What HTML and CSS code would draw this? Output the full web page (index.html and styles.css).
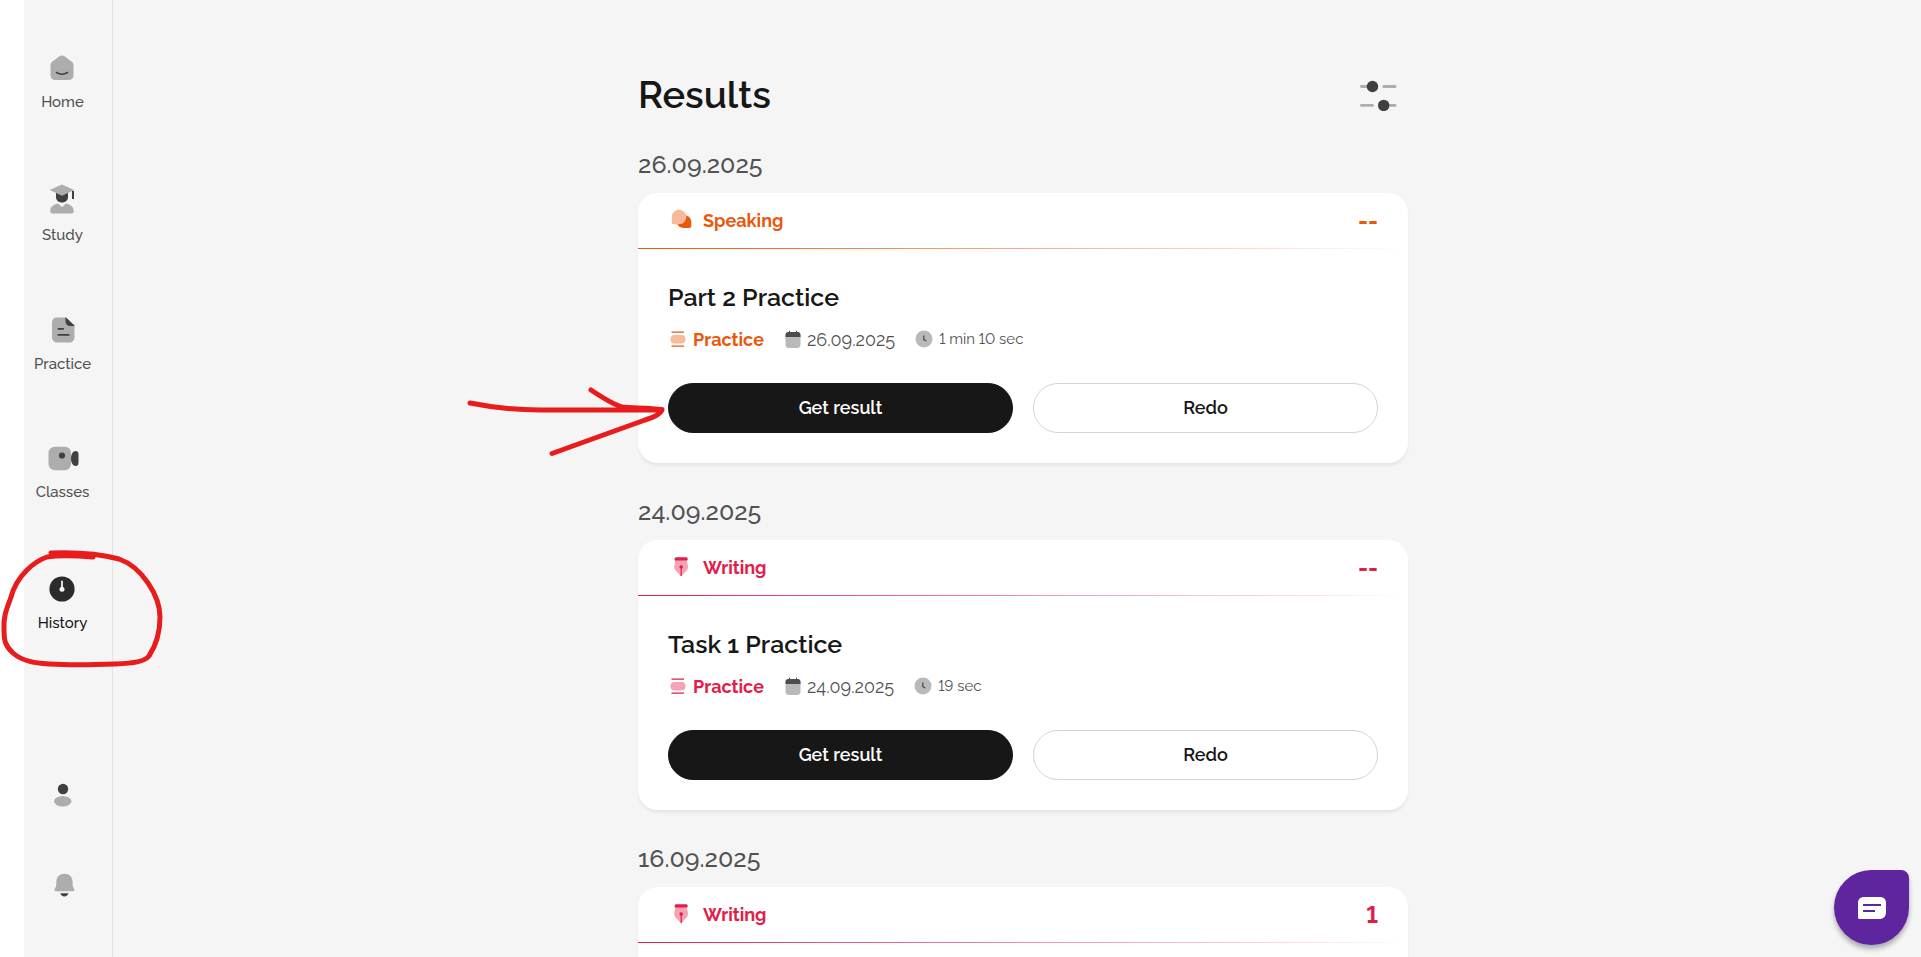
FILE: index.html
```html
<!DOCTYPE html>
<html lang="en">
<head>
<meta charset="utf-8">
<title>Results</title>
<meta name="viewport" content="width=device-width, initial-scale=1">
<link rel="stylesheet" href="styles.css">
</head>
<body>
<svg class="sprite" aria-hidden="true">
  <symbol id="i-practice" viewBox="0 0 16 16"><path d="M1.500 1.200h12.500M1.500 15.200h12.500" stroke="currentColor" stroke-width="1.200"/><rect x=".5" y="4" width="15" height="8.400" rx="4" fill="currentColor" opacity=".4"/></symbol>
  <symbol id="i-calendar" viewBox="0 0 16 18"><rect x=".5" y="2" width="15" height="16" rx="3.400" fill="#b9b9b9"/><path d="M.5 7V5a3 3 0 0 1 3-3H4V.8h1V2h6V.8h1V2h.5a3 3 0 0 1 3 3v2z" fill="#4d4d4d"/></symbol>
  <symbol id="i-clock" viewBox="0 0 18 18"><circle cx="9" cy="9" r="8.500" fill="#b9b9b9"/><path d="M8.800 5.500v4.200l2.600 1.300" fill="none" stroke="#4d4d4d" stroke-width="1.300"/></symbol>
  <symbol id="i-pen" viewBox="0 0 24 24"><path d="M5 5h12l.2 2.500L18 11c.2 1.400-.2 2.700-1 4l-5.800 6.500L5.200 15c-.8-1.300-1.200-2.600-1-4l.8-3.500z" fill="#f7a1b4"/><rect x="4.500" y="2.200" width="13.300" height="3.400" rx="1.700" fill="#e11d48"/><path d="M11.200 11v10" stroke="#e11d48" stroke-width="1.200"/><circle cx="11.200" cy="12" r="1.800" fill="#e11d48"/></symbol>
</svg>
<div class="app">
  <nav class="sidebar" aria-label="Main">
    <a class="nav-item" href="#home">
      <svg width="26" height="26" viewBox="0 0 26 26"><path d="M10.500 1.200c1.500-1.100 3.500-1.100 5 0l7 5.400c1.400 1.100 2 2.200 2 3.900v9.500c0 3.300-1.700 5-5 5h-13c-3.300 0-5-1.700-5-5v-9.500c0-1.700.6-2.800 2-3.900z" fill="#adadad"/><path d="M7.500 17.500q5.500 3.300 11 0" fill="none" stroke="#404040" stroke-width="1.500" stroke-linecap="round"/></svg>
      <span>Home</span>
    </a>
    <a class="nav-item" href="#study">
      <svg width="26" height="30" viewBox="0 0 26 30"><path d="M7 9h12v4c0 3.400-2.600 5.500-6 5.500S7 16.400 7 13z" fill="#404040"/><path d="M.7 6 13 .5 25.300 6 13 11.800z" fill="#adadad"/><path d="M24 7v8" stroke="#404040" stroke-width="2"/><path d="M9 19.500l4 3.500 4-3.500c5 1 7.800 4 7.800 7.500 0 2-1 2.500-3 2.500H4.200c-2 0-3-.5-3-2.500 0-3.500 2.800-6.500 7.800-7.500z" fill="#adadad"/></svg>
      <span>Study</span>
    </a>
    <a class="nav-item" href="#practice">
      <svg width="26" height="26" viewBox="0 .5 26 26"><path d="M7 1h8.500L24.500 9.500V20c0 4-2 6-6 6H8c-4 0-6-2-6-6V7c0-4 1.500-6 5-6z" fill="#adadad"/><path d="M15.500.500 25 9.500h-4c-3.800 0-5.500-1.800-5.500-5.500z" fill="#404040"/><path d="M8.300 12.300h5M8.300 18.400h10.500" stroke="#404040" stroke-width="1.700" stroke-linecap="round"/></svg>
      <span>Practice</span>
    </a>
    <a class="nav-item" href="#classes">
      <svg width="32" height="25" viewBox="0 0 32 25"><rect x="1.500" y=".8" width="22.500" height="23.400" rx="6.200" fill="#adadad"/><path d="M28.500 5c2 0 3 1 3 3v9c0 2-1 3-3 3-2.500 0-4.500-3-4.500-7.500S26 5 28.500 5z" fill="#404040"/><circle cx="15" cy="9.500" r="3.100" fill="#404040"/></svg>
      <span>Classes</span>
    </a>
    <a class="nav-item nav-item-active" href="#history" aria-current="page">
      <svg width="26" height="28" viewBox="0 -2 26 28"><circle cx="13" cy="13" r="12.600" fill="#2b2b2b"/><path d="M13 5.300v8" stroke="#f5f5f5" stroke-width="1.800" stroke-linecap="round"/><circle cx="13" cy="13.200" r="2.500" fill="#f5f5f5"/></svg>
      <span>History</span>
    </a>
    <div class="nav-foot">
      <a class="nav-icon" href="#profile" aria-label="Profile"><svg width="26" height="24" viewBox="0 0 26 24"><circle cx="13" cy="6" r="5.200" fill="#404040"/><ellipse cx="12.700" cy="18.300" rx="8.700" ry="5.300" fill="#adadad"/></svg></a>
      <a class="nav-icon" href="#notifications" aria-label="Notifications"><svg width="26" height="24" viewBox="0 0 26 24"><path d="M6.300 9C6.300 4 9.500.8 14.500.8S22.600 4 22.600 9v3c0 1.200.5 2 1.200 3.200.8 1.500 1 3-1.200 3H6.300c-2.200 0-2-1.500-1.200-3 .7-1.200 1.200-2 1.200-3.200z" fill="#adadad"/><path d="M10.300 20.200h8.200c-.6 1.800-2 3.200-4.100 3.200s-3.500-1.400-4.100-3.200z" fill="#404040"/></svg></a>
    </div>
  </nav>

  <main class="main">
    <div class="column">
      <header class="page-head">
        <h1>Results</h1>
        <button class="filter" type="button" aria-label="Filter results">
          <svg width="38" height="32" viewBox="0 0 38 32"><path d="M1.400 7.500H7M23.700 7.500h11.400M1.400 26.400h11.100M29 26.400h6.100" stroke="#adadad" stroke-width="2.800" stroke-linecap="round"/><circle cx="12.500" cy="7.500" r="5.700" fill="#404040"/><circle cx="23.700" cy="26.400" r="5.700" fill="#404040"/></svg>
        </button>
      </header>

      <section class="day speaking">
        <h2>26.09.2025</h2>
        <article class="card">
          <header class="card-head">
            <svg width="24" height="24" viewBox="0 0 24 24"><path d="M16.300 7.500c3.200 1 5 3.500 5 6.800V17.500c0 1.800-.7 2.500-2.500 2.500H14.500c-3.500 0-6.300-1.500-7.500-4.500z" fill="#ea580c"/><path d="M1.800 10.300a7.300 7.300 0 1 1 7.400 6H4c-1.600 0-2.200-.6-2.200-2.200z" fill="#f7b99b"/></svg>
            <span class="skill">Speaking</span>
            <span class="score">--</span>
          </header>
          <div class="card-body">
            <h3>Part 2 Practice</h3>
            <div class="meta">
              <span class="kind"><svg width="16" height="16"><use href="#i-practice"/></svg>Practice</span>
              <span class="date"><svg width="16" height="18"><use href="#i-calendar"/></svg>26.09.2025</span>
              <span class="length"><svg width="18" height="18"><use href="#i-clock"/></svg>1 min 10 sec</span>
            </div>
            <div class="actions">
              <button class="btn btn-dark" type="button">Get result</button>
              <button class="btn" type="button">Redo</button>
            </div>
          </div>
        </article>
      </section>

      <section class="day writing">
        <h2>24.09.2025</h2>
        <article class="card">
          <header class="card-head">
            <svg width="24" height="24"><use href="#i-pen"/></svg>
            <span class="skill">Writing</span>
            <span class="score">--</span>
          </header>
          <div class="card-body">
            <h3>Task 1 Practice</h3>
            <div class="meta">
              <span class="kind"><svg width="16" height="16"><use href="#i-practice"/></svg>Practice</span>
              <span class="date"><svg width="16" height="18"><use href="#i-calendar"/></svg>24.09.2025</span>
              <span class="length"><svg width="18" height="18"><use href="#i-clock"/></svg>19 sec</span>
            </div>
            <div class="actions">
              <button class="btn btn-dark" type="button">Get result</button>
              <button class="btn" type="button">Redo</button>
            </div>
          </div>
        </article>
      </section>

      <section class="day writing">
        <h2>16.09.2025</h2>
        <article class="card">
          <header class="card-head">
            <svg width="24" height="24"><use href="#i-pen"/></svg>
            <span class="skill">Writing</span>
            <span class="score">1</span>
          </header>
          <div class="card-body"></div>
        </article>
      </section>
    </div>
  </main>
</div>

<button class="chat" type="button" aria-label="Open chat">
  <svg width="28" height="22" viewBox="0 0 28 22"><path d="M6 0h16c4 0 6 2.500 6 6v9c0 4.500-2.500 7-7 7H2c-1.400 0-2-.6-2-2V6c0-3.500 2-6 6-6z" fill="#fff"/><path d="M5 8h18M5 14h12" stroke="#5f259f" stroke-width="1.900"/></svg>
</button>

<svg class="mark mark-loop" width="170" height="130" viewBox="0 545 170 130" aria-hidden="true"><path d="M51 553C75 552 100 554 119 559C142 567 160 596 160 617C160 634 155 647 149 656C144 662 134 663 115 664C90 665 65 665 49 664C34 663 22 661 13 653C5 646 4 640 4 630C3 615 8 606 11 597C17 575 35 561 47 557C60 555 80 556 93 557"/></svg>
<svg class="mark mark-arrow" width="205" height="76" viewBox="464 384 205 76" aria-hidden="true"><path d="M470 403C490 407 515 410 540 410H662M591 390C600 396 612 404 622 407C635 408 650 408 662 409.500C661 414 655 417 645 420L552 453.500"/></svg>
</body>
</html>
```
FILE: styles.css
```css
* { box-sizing: border-box; }

body {
  margin: 0;
  background: #f5f5f5;
  color: #171717;
  font-family: Raleway, Lato, "Open Sans", sans-serif;
  font-weight: 400;
  font-variant-numeric: oldstyle-nums;
}

h1, h2, h3 { margin: 0; font-weight: 600; }
button { font: inherit; cursor: pointer; }
svg { display: block; flex: none; }
.sprite { position: absolute; width: 0; height: 0; }

.app {
  display: flex;
  height: 100vh;
  border-left: 24px solid #fff;
}

.sidebar {
  display: flex;
  flex-direction: column;
  align-items: center;
  flex: none;
  gap: 71px;
  width: 89px;
  padding: 55px 11px 60px 0;
  border-right: 1px solid #e2e2e2;
}

.nav-item {
  display: flex;
  flex-direction: column;
  align-items: center;
  gap: 10px;
  color: #525252;
  font-size: 15px;
  font-weight: 500;
  line-height: 22px;
  text-decoration: none;
}
.nav-item-active { color: #171717; }

.nav-foot {
  display: flex;
  flex-direction: column;
  gap: 66px;
  margin-top: auto;
}

.main {
  flex: 1;
  min-width: 0;
  padding: 70px 20px 0 32px;
  overflow-y: auto;
  scrollbar-width: none;
}
.column { max-width: 770px; margin: 0 auto; }

.page-head {
  display: flex;
  align-items: center;
  justify-content: space-between;
  padding-right: 10px;
}
h1 { font-size: 38px; line-height: 50px; }
.filter { padding: 0; border: 0; background: none; }

.day { padding-top: 28px; }
.day + .day { padding-top: 32px; }
h2 {
  color: #525252;
  font-size: 25px;
  font-weight: 500;
  line-height: 32px;
}

.speaking { --accent: #ea580c; }
.writing { --accent: #e11d48; }

.card {
  margin-top: 13px;
  border-radius: 20px;
  background: #fff;
  box-shadow: 0 3px 3px rgba(0, 0, 0, .06);
}
.card-head {
  display: flex;
  align-items: center;
  height: 56px;
  padding: 0 30px 2px 32px;
  background: linear-gradient(to right, var(--accent), transparent) bottom / 100% 1px no-repeat;
  color: var(--accent);
  font-weight: 700;
}
.skill { margin-left: 9px; font-size: 18px; }
.score { margin-left: auto; font-size: 24px; font-variant-numeric: lining-nums; }

.card-body { min-height: 214px; padding: 32px 30px 30px; }
h3 { font-size: 25px; line-height: 32px; }

.meta {
  display: flex;
  align-items: center;
  height: 24px;
  margin: 14px 0 32px;
  padding-left: 2px;
  color: #525252;
}
.meta span { display: flex; align-items: center; gap: 6px; }
.meta .kind { color: var(--accent); font-size: 18px; font-weight: 700; gap: 7px; }
.meta .date { margin-left: 21px; font-size: 18px; }
.meta .length { margin-left: 20px; font-size: 15px; font-variant-numeric: lining-nums; }

.actions { display: grid; grid-template-columns: 1fr 1fr; gap: 20px; }
.btn {
  height: 50px;
  padding: 0 20px 2px;
  border: 1px solid #d4d4d4;
  border-radius: 25px;
  background: #fff;
  color: #171717;
  font-size: 18px;
  font-weight: 600;
}
.btn-dark { border-color: #171717; background: #171717; color: #fff; }

.chat {
  position: fixed;
  right: 12px;
  bottom: 12px;
  display: grid;
  place-items: center;
  width: 75px;
  height: 75px;
  padding: 0;
  border: 0;
  border-radius: 50% 8px 50% 50%;
  background: #5f259f;
  box-shadow: 0 4px 5px rgba(0, 0, 0, .3);
}

.mark {
  position: absolute;
  fill: none;
  stroke: #e81c1c;
  stroke-width: 5;
  stroke-linecap: round;
  stroke-linejoin: round;
  pointer-events: none;
}
.mark-loop { left: 0; top: 545px; }
.mark-arrow { left: 464px; top: 384px; }
```
